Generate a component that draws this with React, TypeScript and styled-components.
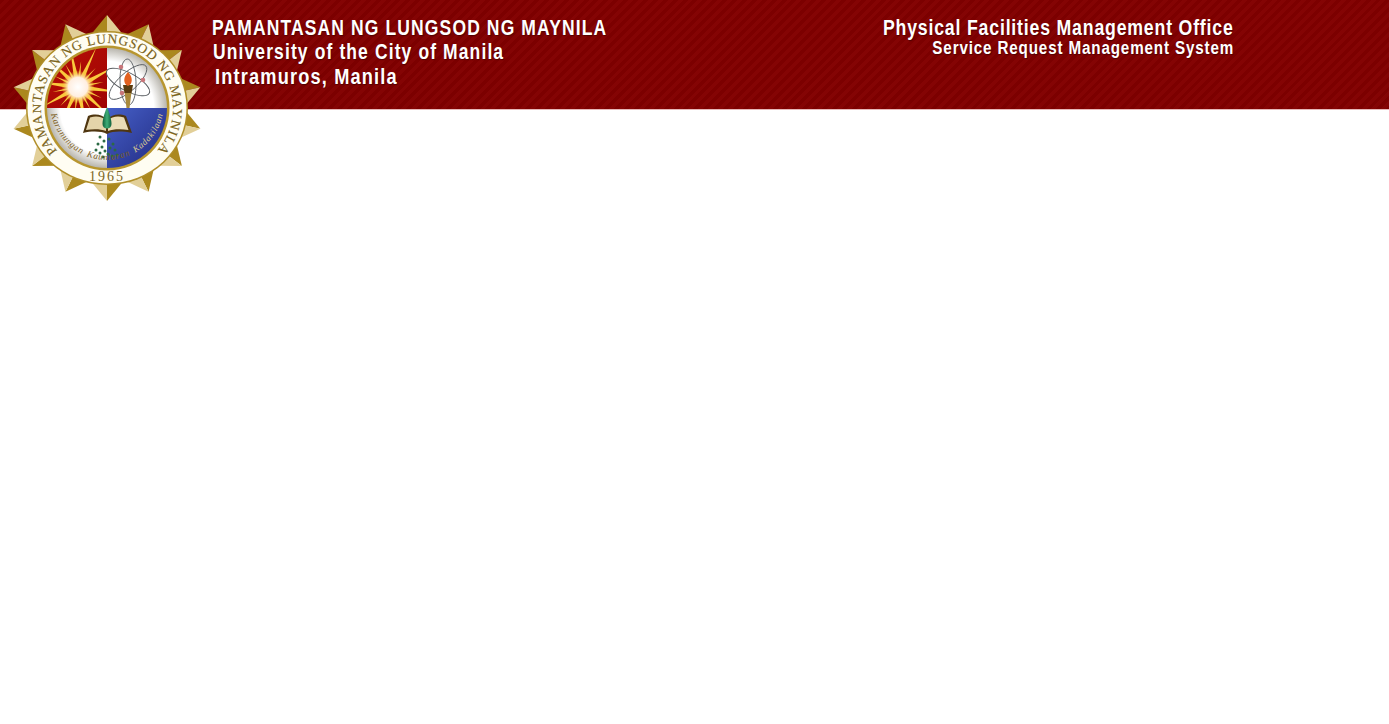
import styled, { createGlobalStyle } from "styled-components";

const GlobalStyle = createGlobalStyle`
  html, body {
    margin: 0;
    padding: 0;
    background: #fff;
  }
`;

const Page = styled.div`
  position: relative;
  min-height: 724px;
  background: #fff;
`;

const Banner = styled.header`
  display: flex;
  justify-content: space-between;
  height: 110px;
  box-sizing: border-box;
  padding: 15px 155px 0 212px;
  background: repeating-linear-gradient(135deg, #7c0000 0 3.5px, #840404 3.5px 7px);
  border-bottom: 1px solid #e6b8b8;
  font-family: "Liberation Sans", Arial, sans-serif;
  font-weight: 700;
  color: #fff;
  text-shadow: 1px 1px 1px rgba(50, 0, 0, 0.6);
`;

const LeftBlock = styled.div`
  display: flex;
  flex-direction: column;
`;

const RightBlock = styled.div`
  display: flex;
  flex-direction: column;
  align-items: flex-end;
`;

const UniversityLine = styled.div<{ $indent: number; $squeeze: number; $height: number }>`
  margin-left: ${(p) => p.$indent}px;
  font-size: 22px;
  line-height: ${(p) => p.$height}px;
  letter-spacing: 1.4px;
  white-space: nowrap;
  transform: scaleX(${(p) => p.$squeeze});
  transform-origin: left center;
`;

const OfficeLine = styled.div<{ $size: number; $squeeze: number; $height: number }>`
  font-size: ${(p) => p.$size}px;
  line-height: ${(p) => p.$height}px;
  letter-spacing: 1px;
  white-space: nowrap;
  transform: scaleX(${(p) => p.$squeeze});
  transform-origin: right center;
`;

const SealWrap = styled.div`
  position: absolute;
  left: 12px;
  top: 13px;
  width: 190px;
  height: 190px;
`;

const CX = 95;
const CY = 95;

// the printed seal is a little wider than tall, so the star is stretched sideways
function polar(r: number, deg: number) {
  const a = ((deg - 90) * Math.PI) / 180;
  return `${(CX + 1.03 * r * Math.cos(a)).toFixed(2)},${(CY + r * Math.sin(a)).toFixed(2)}`;
}

const STEP = 360 / 14;
const tips = Array.from({ length: 14 }, (_, i) => i * STEP);

const sunRays = Array.from({ length: 20 }, (_, i) => {
  const a = (i * Math.PI) / 10 + 0.12;
  const len = i % 2 ? 26 : 44;
  const spread = i % 2 ? 1.8 : 2.8;
  const sx = 66;
  const sy = 74;
  const px = -Math.sin(a) * spread;
  const py = Math.cos(a) * spread;
  return `${sx + px},${sy + py} ${sx + len * Math.cos(a)},${sy + len * Math.sin(a)} ${sx - px},${sy - py}`;
});

const leaves = [
  [88, 124], [92, 128], [86, 131], [90, 134], [84, 137], [88, 140], [93, 138],
  [97, 126], [101, 131], [98, 135], [103, 137], [96, 141], [100, 143], [91, 144], [105, 142],
];

function Seal() {
  return (
    <svg width="190" height="190" viewBox="0 0 190 190">
      <defs>
        <radialGradient id="flare" cx="50%" cy="50%" r="50%">
          <stop offset="0" stopColor="#fff" />
          <stop offset="0.6" stopColor="#ffeee0" />
          <stop offset="1" stopColor="#f8b62c" stopOpacity="0.15" />
        </radialGradient>
        <linearGradient id="redField" x1="0" y1="0" x2="1" y2="1">
          <stop offset="0" stopColor="#b81006" />
          <stop offset="1" stopColor="#a00404" />
        </linearGradient>
        <linearGradient id="blueField" x1="0" y1="0" x2="1" y2="1">
          <stop offset="0" stopColor="#4660c8" />
          <stop offset="1" stopColor="#20287e" />
        </linearGradient>
        <radialGradient id="whiteField" gradientUnits="userSpaceOnUse" cx={CX} cy={CY} r="60">
          <stop offset="0" stopColor="#fff" />
          <stop offset="0.78" stopColor="#fff" />
          <stop offset="1" stopColor="#b9b6ae" />
        </radialGradient>
        <linearGradient id="lampGreen" x1="0" y1="0" x2="1" y2="0">
          <stop offset="0" stopColor="#0f5f3a" />
          <stop offset="0.5" stopColor="#3fae78" />
          <stop offset="1" stopColor="#0f5f3a" />
        </linearGradient>
        <clipPath id="disc">
          <circle cx={CX} cy={CY} r="60" />
        </clipPath>
        <clipPath id="redQuarter">
          <rect x="35" y="35" width="60" height="60" />
        </clipPath>
        <path id="ringArc" d="M 54.2 146.4 A 66 65 0 1 1 135.8 146.4" />
        <path id="mottoArc" d="M 38 90 A 57 57 0 0 0 152 90" />
      </defs>

      {tips.map((deg) => (
        <g key={deg}>
          <polygon points={`${polar(93, deg)} ${polar(74, deg - STEP / 2)} ${polar(68, deg)}`} fill="#ab881e" />
          <polygon points={`${polar(93, deg)} ${polar(74, deg + STEP / 2)} ${polar(68, deg)}`} fill="#e2cf98" />
        </g>
      ))}

      <ellipse cx={CX} cy={CY} rx="81" ry="77" fill="#b08e28" />
      <ellipse cx={CX} cy={CY} rx="79.5" ry="75.5" fill="#fffdf2" />
      <circle cx={CX} cy={CY} r="62.5" fill="#b8962e" />

      <g clipPath="url(#disc)">
        <rect x="35" y="35" width="60" height="60" fill="url(#redField)" />
        <rect x="95" y="35" width="60" height="60" fill="url(#whiteField)" />
        <rect x="35" y="95" width="60" height="60" fill="url(#whiteField)" />
        <rect x="95" y="95" width="60" height="60" fill="url(#blueField)" />
        <g clipPath="url(#redQuarter)">
          {sunRays.map((points) => (
            <polygon key={points} points={points} fill="#f9c93c" />
          ))}
          <circle cx="66" cy="74" r="16" fill="url(#flare)" />
        </g>
      </g>

      {/* atom and torch */}
      <g fill="none" stroke="#585c60" strokeWidth="0.9">
        <ellipse cx="116" cy="69" rx="24" ry="9" transform="rotate(28 116 69)" />
        <ellipse cx="116" cy="69" rx="24" ry="9" transform="rotate(-42 116 69)" />
        <ellipse cx="116" cy="69" rx="23" ry="8" transform="rotate(88 116 69)" />
      </g>
      <circle cx="109" cy="54" r="2.3" fill="#c8767a" />
      <circle cx="131" cy="67" r="2.3" fill="#c8767a" />
      <circle cx="110" cy="80" r="2.3" fill="#c8767a" />
      <polygon points="112.5,79 119.5,79 117.5,95 114.5,95" fill="#a98a3c" />
      <path d="M111 72 L121 72 L119.5 80 L112.5 80Z" fill="#5a3c10" />
      <path d="M116 59 C111 64 111 71 116 73 C121 71 121 64 116 59Z" fill="#e2601f" />

      {/* book, lamp and leaves */}
      <path d="M71 120 L76 103 C84 100 90 102 95 106 C100 102 106 100 114 103 L120 120 C110 118 101 118 95 121 C89 118 80 118 71 120Z" fill="#4f3610" />
      <path d="M74 117 L78 104.5 C85 102.5 90 104 94 107 L94 118 C89 116 81 116 74 117Z" fill="#e4d4aa" />
      <path d="M116.5 117 L112 104.5 C105 102.5 100 104 96 107 L96 118 C101 116 109 116 116.5 117Z" fill="#eadcb6" />
      <path d="M95 94 C93 99 90.5 106 90.5 111 C90.5 117 99.5 117 99.5 111 C99.5 106 97 99 95 94Z" fill="url(#lampGreen)" />
      <g fill="#2b6a44">
        {leaves.map(([x, y]) => (
          <circle key={`${x}-${y}`} cx={x} cy={y} r="1.5" />
        ))}
      </g>

      <text fontFamily="'Liberation Serif', serif" fontSize="9" fontStyle="italic" fill="#7c5e1c" letterSpacing="0.7" wordSpacing="2">
        <textPath href="#mottoArc" startOffset="50%" textAnchor="middle">
          Karunungan Kaunlaran <tspan fill="#dccb92">Kadakilaan</tspan>
        </textPath>
      </text>

      <text fontFamily="'Liberation Serif', serif" fontSize="13.5" fill="#7c651c" stroke="#7c651c" strokeWidth="0.15" letterSpacing="0.85">
        <textPath href="#ringArc" startOffset="50%" textAnchor="middle">
          PAMANTASAN NG LUNGSOD NG MAYNILA
        </textPath>
      </text>
      <text fontFamily="'Liberation Serif', serif" fontSize="14" fill="#7c651c" letterSpacing="2" x={CX} y="168" textAnchor="middle">
        1965
      </text>
    </svg>
  );
}

export default function App() {
  return (
    <Page>
      <GlobalStyle />
      <Banner>
        <LeftBlock>
          <UniversityLine $indent={0} $squeeze={0.796} $height={26}>PAMANTASAN NG LUNGSOD NG MAYNILA</UniversityLine>
          <UniversityLine $indent={1} $squeeze={0.795} $height={22}>University of the City of Manila</UniversityLine>
          <UniversityLine $indent={3} $squeeze={0.828} $height={28}>Intramuros, Manila</UniversityLine>
        </LeftBlock>
        <RightBlock>
          <OfficeLine $size={22} $squeeze={0.805} $height={25}>Physical Facilities Management Office</OfficeLine>
          <OfficeLine $size={18} $squeeze={0.845} $height={17}>Service Request Management System</OfficeLine>
        </RightBlock>
      </Banner>
      <SealWrap>
        <Seal />
      </SealWrap>
    </Page>
  );
}
